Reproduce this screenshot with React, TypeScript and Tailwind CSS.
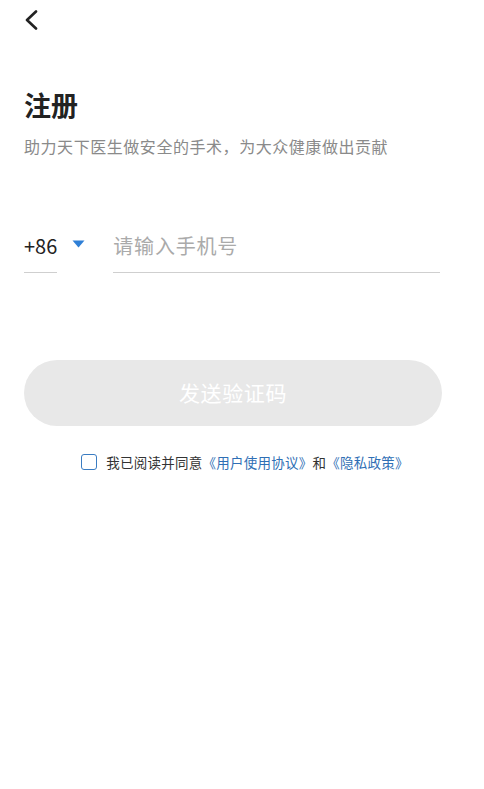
import React from "react";

export default function App() {
  const font = { fontFamily: '"Noto Sans CJK SC", "Noto Sans", sans-serif' };
  return (
    <div className="w-[484px] h-[789px] bg-white flex flex-col" style={font}>
      <div className="ml-[24px] mt-[10px] h-[20px] w-[14px]">
        <svg width="14" height="20" viewBox="0 0 14 20" fill="none">
          <path d="M12 1.5 L3 10 L12 18.5" stroke="#222" strokeWidth="2.6" strokeLinecap="round" strokeLinejoin="round" />
        </svg>
      </div>
      <div className="ml-[24px] mt-[57px] text-[27px] leading-[36px] font-bold text-[#222]">注册</div>
      <div className="ml-[24px] mt-[11px] text-[16px] leading-[24px] text-[#8a8a8a] tracking-[0.55px]">
        助力天下医生做安全的手术，为大众健康做出贡献
      </div>
      <div className="ml-[24px] w-[418px] mt-[74px] flex items-start">
        <div className="flex items-start">
          <div className="border-b border-[#cfcfcf] pb-[12px] text-[20px] leading-[28px] text-[#222]">+86</div>
          <div className="ml-[15px] mt-[8px]">
            <svg width="13" height="8" viewBox="0 0 13 8">
              <path d="M0.5 0.5 H12.5 L6.5 7.5 Z" fill="#2f7fd6" />
            </svg>
          </div>
        </div>
        <div className="ml-[28px] w-[327px] border-b border-[#cfcfcf] pb-[12px] text-[20px] leading-[28px] text-[#aaaaaa] tracking-[0.8px]">
          请输入手机号
        </div>
      </div>
      <div className="ml-[24px] w-[418px] mt-[87px] h-[66px] rounded-full bg-[#e8e8e8] flex items-center justify-center text-white text-[21px] tracking-[0.6px]">
        发送验证码
      </div>
      <div className="mt-[26px] h-[20px] flex items-center justify-center pl-[6px]">
        <div className="w-[16px] h-[16px] border-[1.5px] border-[#3a7cc2] rounded-[3px] mr-[9px]" />
        <div className="text-[13.5px] leading-[20px] text-[#333] tracking-[0.25px]">
          我已阅读并同意<span className="text-[#2f6fb5]">《用户使用协议》</span>和<span className="text-[#2f6fb5]">《隐私政策》</span>
        </div>
      </div>
    </div>
  );
}
